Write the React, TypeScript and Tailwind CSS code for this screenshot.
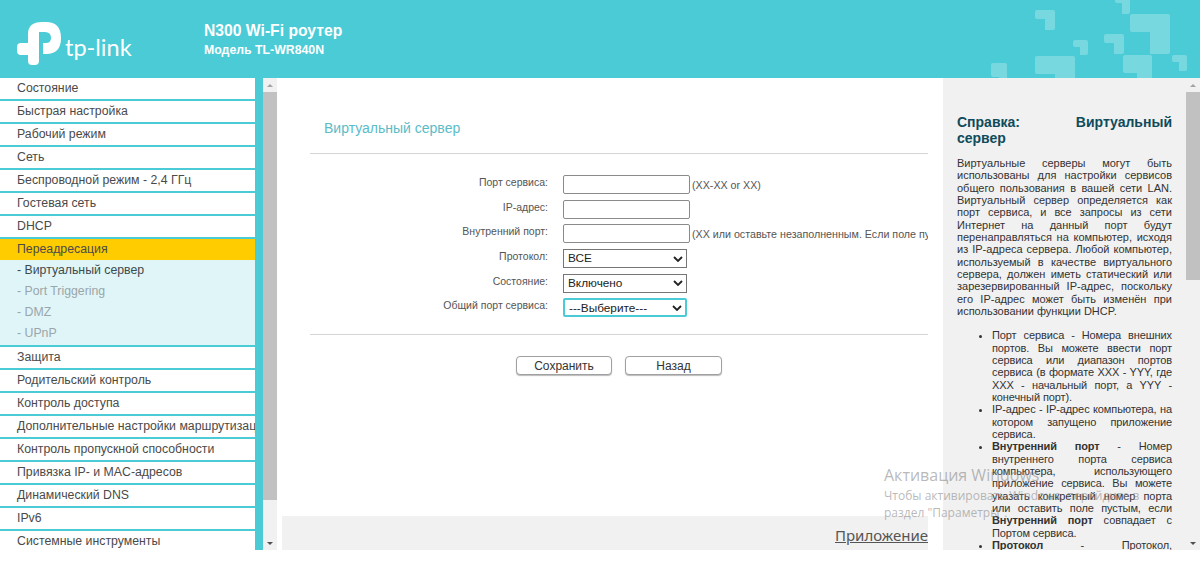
import React from "react";

const sans = "font-['Liberation_Sans',Arial,sans-serif]";

const topItems = ["Состояние","Быстрая настройка","Рабочий режим","Сеть","Беспроводной режим - 2,4 ГГц","Гостевая сеть","DHCP"];
const bottomItems = ["Защита","Родительский контроль","Контроль доступа","Дополнительные настройки маршрутизации","Контроль пропускной способности","Привязка IP- и MAC-адресов","Динамический DNS","IPv6","Системные инструменты"];

function MenuItem({ label, last }: { label: string; last?: boolean }) {
  return (
    <div className={`h-[23px] shrink-0 bg-white pl-[17px] text-[12.3px] leading-[20px] text-[#4a4a4a] whitespace-nowrap overflow-hidden ${last ? "" : "border-b-2 border-[#4acbd6]"}`}>
      {label}
    </div>
  );
}

function Scroll({ thumbH }: { thumbH: string }) {
  return (
    <div className="w-[14px] shrink-0 bg-[#f1f1f1] flex flex-col items-center">
      <svg width="14" height="14" viewBox="0 0 14 14" className="shrink-0"><path d="M4 9 L7 6 L10 9 Z" fill="#a3a3a3" /></svg>
      <div className={`w-full bg-[#c1c1c1] ${thumbH}`} />
      <div className="flex-1" />
      <svg width="14" height="14" viewBox="0 0 14 14" className="shrink-0"><path d="M4 6 L7 9 L10 6 Z" fill="#505050" /></svg>
    </div>
  );
}

function Row({ label, children, hint }: { label: string; children: React.ReactNode; hint?: string }) {
  return (
    <div className="flex h-[24.7px] items-start whitespace-nowrap">
      <div className="w-[238px] shrink-0 text-right text-[10.5px] leading-[14px] text-[#555]">{label}</div>
      <div className="ml-[15px] w-[127px] shrink-0">{children}</div>
      {hint && <div className="ml-[2px] text-[10.7px] leading-[14px] pt-[3px] text-[#555]">{hint}</div>}
    </div>
  );
}

function Field() {
  return <div className="h-[19px] w-[127px] rounded-[2px] border border-[#8a8a8a] bg-white" />;
}

function Sel({ v, focus }: { v: string; focus?: boolean }) {
  return (
    <div className={`h-[19px] w-[124px] flex items-center justify-between pl-[4px] pr-[3px] text-[11.8px] text-[#222] bg-white ${focus ? "rounded-[2px] border-2 border-[#4acbd6]" : "border border-[#767676]"}`}>
      <span className="pt-[1px]">{v}</span>
      <svg width="10" height="6" viewBox="0 0 10 6"><path d="M1 1 L5 5 L9 1" fill="none" stroke="#222" strokeWidth="1.8" /></svg>
    </div>
  );
}

const squares: [number, number, number, number][] = [
  [1035, 10, 20, 20],
  [1130, 14, 40, 40],
  [1115, -6, 15, 20],
  [1073, 40, 15, 15],
  [1104, 34, 20, 20],
  [1123, 55, 29, 40],
  [1172, 55, 15, 16],
  [991, 63, 16, 30],
  [1035, 56, 40, 40],
];

function Header() {
  return (
    <div className="h-[78px] shrink-0 bg-[#4acbd6] relative overflow-hidden flex items-start text-white">
      <svg width="44" height="43" viewBox="17 22 44 43" className="ml-[17px] mt-[22px] shrink-0">
        <path fill="#fff" d="M28 34 Q28 22 42 22 H46 Q61 22 61 38 Q61 54 46 54 H43 V43 H46 Q51 43 51 38 Q51 32 45 32 H39 V61 Q39 65 35 65 H32 Q28 65 28 61 V55 H21 Q17 55 17 51 V47 Q17 43 21 43 H28 Z" />
      </svg>
      <span className="ml-[4px] mt-[29px] font-['Lato',sans-serif] font-normal text-[23.5px] leading-[36px]">tp-link</span>
      <div className={`${sans} absolute left-[204px] top-[22px] font-bold`}>
        <div className="text-[15.7px] leading-[18px]">N300 Wi-Fi роутер</div>
        <div className="text-[12.3px] leading-[18px] mt-[1px]">Модель TL-WR840N</div>
      </div>
      <svg width="1200" height="78" viewBox="0 0 1200 78" className="absolute left-0 top-0">
        {squares.map(([x, y, w, h], i) => {
          const bar = Math.round(h * 0.46);
          const col = Math.round(w * 0.5);
          return (
            <path key={i} fill="#ffffff" fillOpacity="0.25"
              d={`M${x + 2} ${y} H${x + w - 2} Q${x + w} ${y} ${x + w} ${y + 2} V${y + h - 2} Q${x + w} ${y + h} ${x + w - 2} ${y + h} H${x + w - col} V${y + bar} H${x + 2} Q${x} ${y + bar} ${x} ${y + bar - 2} V${y + 2} Q${x} ${y} ${x + 2} ${y} Z`} />
          );
        })}
      </svg>
    </div>
  );
}

function Sidebar() {
  return (
    <div className="w-[263px] shrink-0 border-r-[8px] border-[#4acbd6] overflow-hidden flex flex-col">
      {topItems.map((t) => <MenuItem key={t} label={t} />)}
      <div className="h-[23px] shrink-0 bg-[#ffcc00] pl-[17px] text-[12.3px] leading-[20px] text-[#4a4a4a]">Переадресация</div>
      <div className="bg-[#e0f5f8] border-b-2 border-[#4acbd6] text-[12.3px] leading-[21px] pl-[17px] h-[87px] shrink-0 -mt-[2px] text-[#9aa6a9]">
        <div className="text-[#3d4a4e]">- Виртуальный сервер</div>
        <div>- Port Triggering</div>
        <div>- DMZ</div>
        <div>- UPnP</div>
      </div>
      {bottomItems.map((t, i) => <MenuItem key={t} label={t} last={i === bottomItems.length - 1} />)}
    </div>
  );
}

function Main() {
  return (
    <div className="w-[666px] shrink-0 bg-white flex flex-col overflow-hidden">
      <div className="pl-[47px] pt-[41px] text-[14px] leading-[18px] text-[#5bbcc8]">Виртуальный сервер</div>
      <div className="ml-[33px] mr-[15px] mt-[16px] h-[1px] bg-[#d5d5d5] shrink-0" />
      <div className="ml-[33px] mr-[15px] mt-[21px] h-[159px] shrink-0 overflow-hidden">
        <Row label="Порт сервиса:" hint="(XX-XX or XX)"><Field /></Row>
        <Row label="IP-адрес:"><Field /></Row>
        <Row label="Внутренний порт:" hint="(XX или оставьте незаполненным. Если поле пустым, то внутренний порт совпадает с портом сервиса)"><Field /></Row>
        <Row label="Протокол:"><Sel v="ВСЕ" /></Row>
        <Row label="Состояние:"><Sel v="Включено" /></Row>
        <Row label="Общий порт сервиса:"><Sel v="---Выберите---" focus /></Row>
      </div>
      <div className="ml-[33px] mr-[15px] h-[1px] bg-[#d5d5d5] shrink-0" />
      <div className="mt-[21px] flex gap-[13px] pl-[239px]">
        <div className="h-[19px] w-[96px] rounded-[4px] border border-[#a0a0a0] shadow-[0_1px_1px_#bbb] bg-white text-center text-[12px] leading-[18px] text-[#333]">Сохранить</div>
        <div className="h-[19px] w-[97px] rounded-[4px] border border-[#a0a0a0] shadow-[0_1px_1px_#bbb] bg-white text-center text-[12px] leading-[18px] text-[#333]">Назад</div>
      </div>
      <div className="flex-1" />
      <div className="ml-[5px] mr-[15px] h-[34px] bg-[#f1f1f1] text-right font-['Noto_Sans',sans-serif] text-[15px] leading-[39px] text-[#555] underline">Приложение</div>
    </div>
  );
}

function Help() {
  return (
    <div className="flex-1 flex min-w-0">
      <div className="flex-1 min-w-0 bg-[#f1f1f1] overflow-hidden px-[14px] pt-[36px] text-justify text-[11px] leading-[12.33px] text-[#333]">
        <div className="text-[14px] leading-[16px] font-bold text-[#0f4b5a]">Справка: Виртуальный сервер</div>
        <p className="mt-[11px]">Виртуальные серверы могут быть использованы для настройки сервисов общего пользования в вашей сети LAN. Виртуальный сервер определяется как порт сервиса, и все запросы из сети Интернет на данный порт будут перенаправляться на компьютер, исходя из IP-адреса сервера. Любой компьютер, используемый в качестве виртуального сервера, должен иметь статический или зарезервированный IP-адрес, поскольку его IP-адрес может быть изменён при использовании функции DHCP.</p>
        <ul className="mt-[12px] list-disc pl-[35px] tracking-[-0.1px]">
          <li>Порт сервиса - Номера внешних портов. Вы можете ввести порт сервиса или диапазон портов сервиса (в формате XXX - YYY, где XXX - начальный порт, а YYY - конечный порт).</li>
          <li>IP-адрес - IP-адрес компьютера, на котором запущено приложение сервиса.</li>
          <li><b className="font-semibold">Внутренний порт</b> - Номер внутреннего порта сервиса компьютера, использующего приложение сервиса. Вы можете указать конкретный номер порта или оставить поле пустым, если <b className="font-semibold">Внутренний порт</b> совпадает с Портом сервиса.</li>
          <li><b className="font-semibold">Протокол</b> - Протокол, используемый для этого приложения.</li>
        </ul>
      </div>
      <Scroll thumbH="h-[188px]" />
    </div>
  );
}

export default function App() {
  return (
    <div className={`${sans} relative h-[588px] w-[1200px] overflow-hidden bg-white flex flex-col`}>
      <Header />
      <div className="flex h-[472px] shrink-0 overflow-hidden">
        <Sidebar />
        <Scroll thumbH="h-[408px]" />
        <Main />
        <Help />
      </div>
      <div className="absolute left-[884px] top-[464px] whitespace-nowrap font-['Open_Sans',sans-serif] text-[#8a8a8a]/60">
        <div className="text-[16px] leading-[22px]">Активация Windows</div>
        <div className="text-[12px] leading-[17px] mt-[1px]">Чтобы активировать Windows, перейдите в</div>
        <div className="text-[12px] leading-[17px]">раздел "Параметры".</div>
      </div>
    </div>
  );
}
